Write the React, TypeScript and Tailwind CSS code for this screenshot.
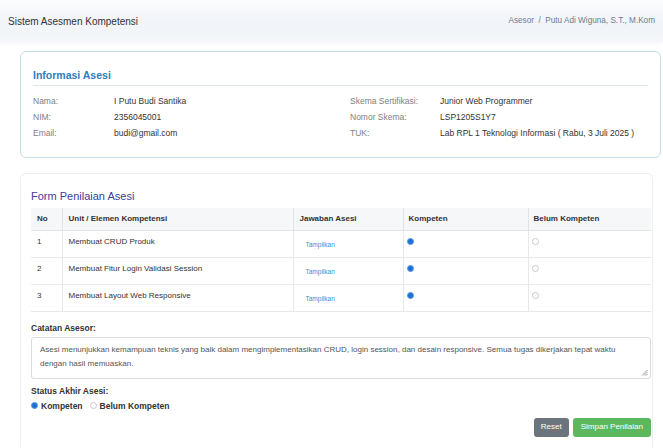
import React from "react";

const font = { fontFamily: '"Liberation Sans", Arial, sans-serif' };

function RadioDot({ checked }: { checked: boolean }) {
  return checked ? (
    <span className="inline-block w-[7px] h-[7px] rounded-full bg-[#1d6fd1] border border-[#5b97dd]" />
  ) : (
    <span className="inline-block w-[7px] h-[7px] rounded-full bg-white border border-[#c9c9c9]" />
  );
}

const units = [
  { no: 1, name: "Membuat CRUD Produk" },
  { no: 2, name: "Membuat Fitur Login Validasi Session" },
  { no: 3, name: "Membuat Layout Web Responsive" },
];

export default function App() {
  return (
    <div className="w-[663px] h-[448px] overflow-hidden bg-white text-[#333]" style={font}>
      {/* top bar */}
      <div className="h-[42px] flex items-center justify-between pl-[8px] pr-[8px] bg-gradient-to-b from-[#fbfcfd] via-[#f1f4f8] to-[#f4f6f9] shadow-[0_2px_4px_rgba(0,0,0,0.04)]">
        <span className="text-[10px] text-[#333]">Sistem Asesmen Kompetensi</span>
        <span className="text-[8.2px] text-[#6b7c93]">
          Asesor&nbsp;&nbsp;/&nbsp;&nbsp;Putu Adi Wiguna, S.T., M.Kom
        </span>
      </div>

      <div className="pl-[20px] pr-[2px] pt-[9px]">
        {/* identity card */}
        <div className="border border-[#c3dfe8] rounded-[6px] px-[12px] pt-[16px] pb-[16px]">
          <h3 className="text-[10.5px] leading-[14px] font-bold text-[#2f7cc0] pb-[3px] border-b border-[#dfe6ea]">
            Informasi Asesi
          </h3>
          <div className="flex pt-[7px] text-[8.5px] leading-[16px]">
            <div className="w-[317px]">
              <div className="flex"><span className="w-[81px] text-[#808080]">Nama:</span><span>I Putu Budi Santika</span></div>
              <div className="flex"><span className="w-[81px] text-[#808080]">NIM:</span><span>2356045001</span></div>
              <div className="flex"><span className="w-[81px] text-[#808080]">Email:</span><span>budi@gmail.com</span></div>
            </div>
            <div>
              <div className="flex"><span className="w-[90px] text-[#808080]">Skema Sertifikasi:</span><span>Junior Web Programmer</span></div>
              <div className="flex"><span className="w-[90px] text-[#808080]">Nomor Skema:</span><span>LSP1205S1Y7</span></div>
              <div className="flex"><span className="w-[90px] text-[#808080]">TUK:</span><span>Lab RPL 1 Teknologi Informasi ( Rabu, 3 Juli 2025 )</span></div>
            </div>
          </div>
        </div>

        {/* assessment form */}
        <div className="mt-[15px] mr-[8px] border border-[#eeeeee] rounded-[6px] pl-[10px] pr-[3px] pt-[15px] pb-[14px]">
          <h3 className="text-[11px] leading-[14px] text-[#3c3d9c] mb-[5px]">Form Penilaian Asesi</h3>

          <table className="w-[620px] border-collapse text-[8px]">
            <thead>
              <tr className="bg-[#f6f7f8] h-[22px] text-left">
                <th className="w-[31px] pl-[6px] font-bold border-b border-[#e3e3e3]">No</th>
                <th className="w-[231px] pl-[6px] font-bold border-l border-b border-[#e3e3e3]">Unit / Elemen Kompetensi</th>
                <th className="w-[110px] pl-[6px] font-bold border-l border-b border-[#e3e3e3]">Jawaban Asesi</th>
                <th className="w-[125px] pl-[5px] font-bold border-l border-b border-[#e3e3e3]">Kompeten</th>
                <th className="pl-[5px] font-bold border-l border-b border-[#e3e3e3]">Belum Kompeten</th>
              </tr>
            </thead>
            <tbody>
              {units.map((u) => (
                <tr key={u.no} className="h-[27px]">
                  <td className="pl-[6px] pb-[4px] border-b border-[#e8e8e8]">{u.no}</td>
                  <td className="pl-[6px] pb-[4px] border-l border-b border-[#e8e8e8]">{u.name}</td>
                  <td className="pl-[12px] pt-[2px] border-l border-b border-[#e8e8e8]">
                    <span className="text-[6.5px] text-[#3b8ed6]">Tampilkan</span>
                  </td>
                  <td className="pl-[3px] pb-[4px] border-l border-b border-[#e8e8e8]">
                    <span className="flex"><RadioDot checked /></span>
                  </td>
                  <td className="pl-[3px] pb-[4px] border-l border-b border-[#e8e8e8]">
                    <span className="flex"><RadioDot checked={false} /></span>
                  </td>
                </tr>
              ))}
            </tbody>
          </table>

          <div className="mt-[11px] text-[8.5px] leading-[10px] font-bold text-[#333]">Catatan Asesor:</div>
          <div className="relative mt-[4px] w-[620px] h-[42px] border border-[#dcdcdc] rounded-[3px] px-[8px] pt-[5px] text-[8px] leading-[14px] text-[#555]">
            Asesi menunjukkan kemampuan teknis yang baik dalam mengimplementasikan CRUD, login session, dan desain responsive. Semua tugas dikerjakan tepat waktu dengan hasil memuaskan.
            <svg className="absolute right-[2px] bottom-[2px]" width="7" height="7" viewBox="0 0 7 7">
              <path d="M6.5 1 L1 6.5 M6.5 3 L3 6.5 M6.5 5 L5 6.5" stroke="#8a8a8a" strokeWidth="0.8" />
            </svg>
          </div>

          <div className="mt-[7px] text-[8.5px] leading-[10px] font-bold text-[#333]">Status Akhir Asesi:</div>
          <div className="mt-[5px] flex items-center text-[8.5px] leading-[10px] font-bold text-[#333]">
            <RadioDot checked />
            <span className="ml-[3px]">Kompeten</span>
            <span className="ml-[7px]"><RadioDot checked={false} /></span>
            <span className="ml-[3px]">Belum Kompeten</span>
          </div>

          <div className="mt-[7px] w-[620px] flex justify-end gap-[4px]">
            <button className="h-[19px] px-[7px] rounded-[3px] bg-[#6c757d] text-white text-[8px]">Reset</button>
            <button className="h-[19px] px-[8px] rounded-[3px] bg-[#5cb85c] text-white text-[8px]">Simpan Penilaian</button>
          </div>
        </div>
      </div>
    </div>
  );
}
